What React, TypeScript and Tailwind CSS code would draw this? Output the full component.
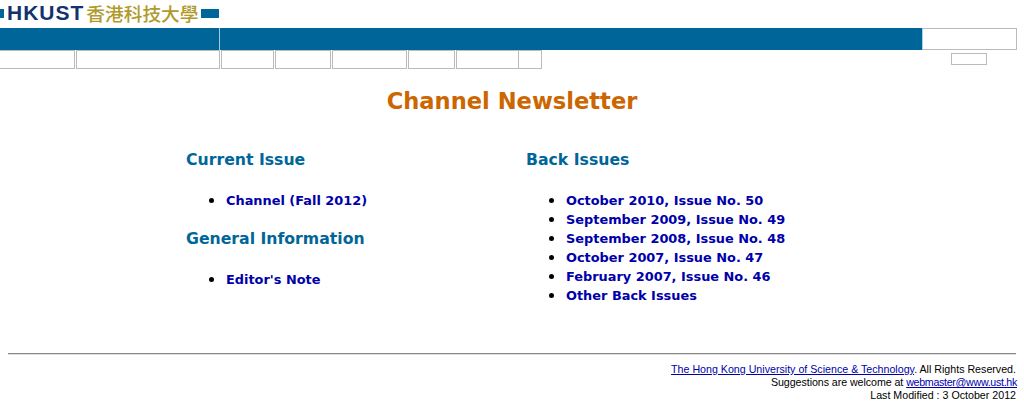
const navWidths = ["w-[75px] border-l-0", "w-[144px]", "w-[53px]", "w-[56px]", "w-[75px]", "w-[47px]", "w-[63px]"];

function Logo() {
  return (
    <div className="flex h-[28px] items-center pb-[1px]">
      <div className="h-[9px] w-[4px] bg-[#006699]" />
      <span className="mb-[2px] ml-[3px] font-['Liberation_Sans',sans-serif] text-[21px] leading-[24px] font-bold tracking-[1px] text-[#14326e]">HKUST</span>
      <span className="mb-[2px] ml-[2px] font-['Noto_Sans_CJK_TC',sans-serif] text-[18.7px] leading-[24px] font-medium text-[#b09a2c]">香港科技大學</span>
      <div className="ml-[3px] h-[9px] w-[18px] bg-[#006699]" />
    </div>
  );
}

function Item({ children }: { children: string }) {
  return (
    <li className="h-[19px] leading-[19px] marker:text-[17px]">
      <a className="font-bold text-[#0000aa]" href="#">{children}</a>
    </li>
  );
}

export default function App() {
  return (
    <div className="h-[410px] w-[1024px] overflow-hidden bg-white font-['DejaVu_Sans',Verdana,sans-serif] text-[12.9px] text-black">
      <Logo />
      <div className="flex h-[22px]">
        <div className="h-full w-[220px] border-r border-[#a8c8dc] bg-[#006699]" />
        <div className="h-full w-[702px] bg-[#006699]" />
        <div className="h-full w-[95px] border border-l-[#a8d0e4] border-[#bbbbbb] bg-white" />
      </div>
      <div className="flex h-[19px]">
        <div className="flex gap-[1px]">
          {navWidths.map((w, i) => (
            <div key={i} className={`h-full border border-[#bbbbbb] ${w}`} />
          ))}
          <div className="-ml-[1px] h-full w-[23px] border-t border-r border-b border-[#bbbbbb]" />
        </div>
        <div className="mt-[3px] ml-[409px] h-[12px] w-[36px] border border-[#bbbbbb]" />
      </div>
      <h1 className="mt-[17px] text-center text-[22.6px] leading-[30px] font-bold text-[#cc6600]">Channel Newsletter</h1>
      <div className="mt-[33px] ml-[186px] flex">
        <div className="w-[340px]">
          <h2 className="text-[15.7px] leading-[22px] font-bold text-[#006699]">Current Issue</h2>
          <ul className="mt-[19px] ml-[40px] list-disc">
            <Item>Channel (Fall 2012)</Item>
          </ul>
          <h2 className="mt-[19px] text-[15.7px] leading-[22px] font-bold text-[#006699]">General Information</h2>
          <ul className="mt-[19px] ml-[40px] list-disc">
            <Item>Editor's Note</Item>
          </ul>
        </div>
        <div>
          <h2 className="text-[15.7px] leading-[22px] font-bold text-[#006699]">Back Issues</h2>
          <ul className="mt-[19px] ml-[40px] list-disc">
            <Item>October 2010, Issue No. 50</Item>
            <Item>September 2009, Issue No. 49</Item>
            <Item>September 2008, Issue No. 48</Item>
            <Item>October 2007, Issue No. 47</Item>
            <Item>February 2007, Issue No. 46</Item>
            <Item>Other Back Issues</Item>
          </ul>
        </div>
      </div>
      <div className="mt-[49px] ml-[8px] h-[2px] w-[1008px] border-t border-b border-t-[#888888] border-b-[#dddddd]" />
      <div className="mt-[8px] w-[1017px] text-right font-['Liberation_Sans',Arial,sans-serif] text-[10.67px] leading-[13px]">
        <div className="pr-[1px]"><a className="text-[#0000aa] underline" href="#">The Hong Kong University of Science &amp; Technology</a>. All Rights Reserved.</div>
        <div className="tracking-[-0.06px]">Suggestions are welcome at <a className="tracking-[-0.3px] text-[#0000aa] underline" href="#">webmaster@www.ust.hk</a></div>
        <div className="pr-[1px]">Last Modified : 3 October 2012</div>
      </div>
    </div>
  );
}
